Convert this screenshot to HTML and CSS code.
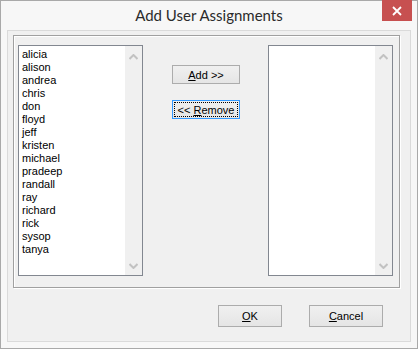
FILE: index.html
```html
<!DOCTYPE html>
<html lang="en">
  <head>
    <title>Add User Assignments</title>
    <link rel="stylesheet" href="styles.css">
  </head>
  <body>
    <div class="window">
      <div class="titlebar">
        <span class="title">Add User Assignments</span>
        <div class="close">
          <svg width="10" height="10" viewBox="0 0 10 10">
            <path d="M1 1 L9 9 M9 1 L1 9" stroke="#fff" stroke-width="1.8" />
          </svg>
        </div>
      </div>
      <div class="client">
        <div class="group">
          <div class="listbox">
            <ul class="items">
              <li>alicia</li>
              <li>alison</li>
              <li>andrea</li>
              <li>chris</li>
              <li>don</li>
              <li>floyd</li>
              <li>jeff</li>
              <li>kristen</li>
              <li>michael</li>
              <li>pradeep</li>
              <li>randall</li>
              <li>ray</li>
              <li>richard</li>
              <li>rick</li>
              <li>sysop</li>
              <li>tanya</li>
            </ul>
            <div class="scrollbar">
              <svg width="9" height="6" viewBox="0 0 9 6"><path d="M0.5 5 L4.5 1 L8.5 5" fill="none" stroke="#c2c2c2" stroke-width="2" /></svg>
              <svg width="9" height="6" viewBox="0 0 9 6"><path d="M0.5 1 L4.5 5 L8.5 1" fill="none" stroke="#c2c2c2" stroke-width="2" /></svg>
            </div>
          </div>
          <div class="moves">
            <button class="btn"><u>A</u>dd &gt;&gt;</button>
            <button class="btn focused"><span class="focus-rect">&lt;&lt;&nbsp;<u>R</u>emove</span></button>
          </div>
          <div class="listbox">
            <ul class="items"></ul>
            <div class="scrollbar">
              <svg width="9" height="6" viewBox="0 0 9 6"><path d="M0.5 5 L4.5 1 L8.5 5" fill="none" stroke="#c2c2c2" stroke-width="2" /></svg>
              <svg width="9" height="6" viewBox="0 0 9 6"><path d="M0.5 1 L4.5 5 L8.5 1" fill="none" stroke="#c2c2c2" stroke-width="2" /></svg>
            </div>
          </div>
        </div>
        <div class="actions">
          <button class="btn wide"><u>O</u>K</button>
          <button class="btn wide"><u>C</u>ancel</button>
        </div>
      </div>
    </div>
  </body>
</html>
```

FILE: styles.css
```css
body {
  margin: 0;
  font-family: "Liberation Sans", Arial, sans-serif;
  font-size: 11px;
  color: #000;
}

.window {
  width: 418px;
  height: 349px;
  box-sizing: border-box;
  border: 1px solid #a9a9a9;
  background-color: #f7f7f7;
  padding: 0 6px 6px 6px;
}

.titlebar {
  height: 29px;
  display: flex;
  justify-content: center;
  align-items: center;
  position: relative;
}

.title {
  font-family: Lato, "Noto Sans", sans-serif;
  font-size: 15px;
  color: #2b2b2b;
  margin-top: -1px;
}

.close {
  position: absolute;
  top: -1px;
  right: -1px;
  width: 30px;
  height: 21px;
  background-color: #c75050;
  display: flex;
  justify-content: center;
  align-items: center;
}

.client {
  height: 312px;
  box-sizing: border-box;
  border: 1px solid #dadada;
  background-color: #f0f0f0;
  padding: 4px 10px 0 5px;
}

.group {
  height: 253px;
  box-sizing: border-box;
  border: 1px solid #a0a0a0;
  box-shadow: inset 1px 1px 0 #fff, 1px 1px 0 #fff;
  display: flex;
  align-items: flex-start;
  padding: 9px 0 0 4px;
}

.listbox {
  width: 125px;
  height: 231px;
  box-sizing: border-box;
  border: 1px solid #828790;
  background-color: #fff;
  display: flex;
}

.items {
  flex: 1;
  list-style: none;
  margin: 0;
  padding: 2px 0 0 3px;
}

.items li {
  height: 13px;
  line-height: 13px;
}

.scrollbar {
  width: 17px;
  background-color: #f0f0f0;
  display: flex;
  flex-direction: column;
  justify-content: space-between;
  align-items: center;
  padding: 8px 0 6px 0;
}

.moves {
  width: 68px;
  margin: 0 28px 0 29px;
  padding-top: 20px;
  display: flex;
  flex-direction: column;
  gap: 16px;
}

.btn {
  font-family: "Liberation Sans", Arial, sans-serif;
  font-size: 11px;
  color: #000;
  height: 19px;
  padding: 0;
  border: 1px solid #acacac;
  background: linear-gradient(#f0f0f0, #e5e5e5);
  display: flex;
  justify-content: center;
  align-items: center;
}

.focused {
  border-color: #3399ff;
  padding: 1px;
}

.focus-rect {
  flex: 1;
  align-self: stretch;
  border: 1px dotted #000;
  display: flex;
  justify-content: center;
  align-items: center;
}

.actions {
  display: flex;
  justify-content: flex-end;
  gap: 27px;
  padding: 17px 17px 0 0;
}

.wide {
  width: 64px;
  height: 22px;
}

.wide + .wide {
  width: 74px;
}
```
